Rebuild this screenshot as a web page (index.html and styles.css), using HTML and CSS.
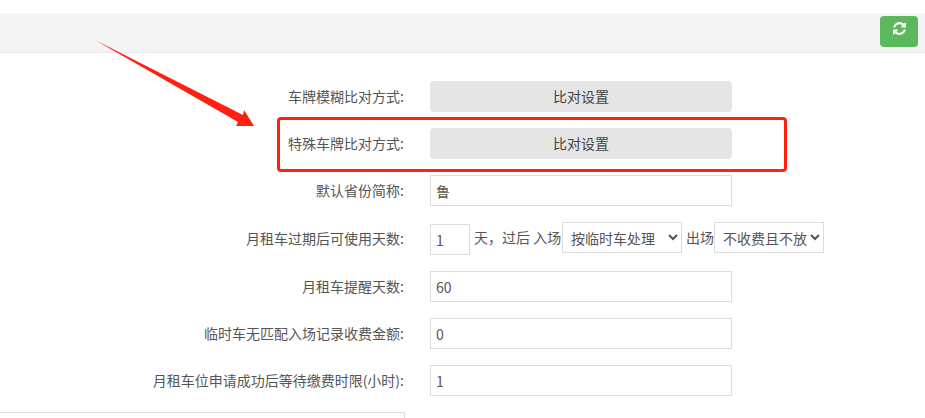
FILE: index.html
```html
<!DOCTYPE html>
<html lang="zh-CN">
<head>
<meta charset="utf-8">
<title>车牌比对设置</title>
<link rel="stylesheet" href="styles.css">
</head>
<body>
<header class="toolbar">
  <button class="refresh" type="button" aria-label="刷新">
    <svg class="refresh-icon" viewBox="128 128 1536 1536" aria-hidden="true"><path d="M1639 1056q0 5-1 7-64 268-268 434.5t-478 166.5q-146 0-282.5-55t-243.5-157l-129 129q-19 19-45 19t-45-19-19-45v-448q0-26 19-45t45-19h448q26 0 45 19t19 45-19 45l-137 137q71 66 161 102t187 36q134 0 250-65t186-179q11-17 53-117 8-23 30-23h192q13 0 22.5 9.5t9.5 22.5zm25-800v448q0 26-19 45t-45 19h-448q-26 0-45-19t-19-45 19-45l138-138q-148-137-349-137-134 0-250 65t-186 179q-11 17-53 117-8 23-30 23h-199q-13 0-22.5-9.5t-9.5-22.5v-7q65-268 270-434.5t480-166.5q146 0 284 55.5t245 156.5l130-129q19-19 45-19t45 19 19 45z"/></svg>
  </button>
</header>
<main class="form">
  <div class="row">
    <label class="label">车牌模糊比对方式:</label>
    <button class="action" type="button">比对设置</button>
  </div>
  <div class="row">
    <label class="label">特殊车牌比对方式:</label>
    <button class="action" type="button">比对设置</button>
  </div>
  <div class="row">
    <label class="label">默认省份简称:</label>
    <input class="field" type="text" value="鲁">
  </div>
  <div class="row row-tall">
    <label class="label">月租车过期后可使用天数:</label>
    <div class="inline">
      <input class="field field-short" type="text" value="1">
      <span class="text text-days">天，过后 入场</span>
      <select class="choice choice-in"><option>按临时车处理</option></select>
      <span class="text text-out">出场</span>
      <select class="choice choice-out"><option>不收费且不放</option></select>
    </div>
  </div>
  <div class="row">
    <label class="label">月租车提醒天数:</label>
    <input class="field" type="text" value="60">
  </div>
  <div class="row">
    <label class="label">临时车无匹配入场记录收费金额:</label>
    <input class="field" type="text" value="0">
  </div>
  <div class="row">
    <label class="label">月租车位申请成功后等待缴费时限(小时):</label>
    <input class="field" type="text" value="1">
  </div>
  <div class="lower-box"></div>
</main>
<svg class="arrow" viewBox="0 0 925 418" aria-hidden="true"><polygon points="95,40 243,115 244,110 254,126 236,126 238,122"/></svg>
<div class="highlight"></div>
</body>
</html>
```
FILE: styles.css
```css
* {
  box-sizing: border-box;
}

html,
body {
  height: 418px;
  margin: 0;
  overflow: hidden;
}

body {
  position: relative;
  background: #fff;
  color: #555;
  font: 14px/20px "Noto Sans CJK SC", "Noto Sans", sans-serif;
}

.toolbar {
  display: flex;
  justify-content: flex-end;
  height: 40px;
  margin-top: 13px;
  padding: 3px 7px 0 0;
  background: #f4f4f4;
  border-bottom: 1px solid #e7e7e7;
}

.refresh {
  display: flex;
  justify-content: center;
  width: 38px;
  height: 31px;
  padding: 6px 0 0;
  background: #5cb85c;
  border: 0;
  border-radius: 4px;
}

.refresh-icon {
  width: 13px;
  height: 13px;
  fill: #fff;
}

.form {
  display: flex;
  flex-direction: column;
  gap: 16px;
  padding-top: 28px;
}

.row {
  display: flex;
  align-items: center;
  gap: 25px;
  min-height: 31px;
}

.row-tall {
  min-height: 33px;
}

.label {
  flex: 0 0 405px;
  padding-right: 1px;
  padding-bottom: 2px;
  color: #555;
  text-align: right;
}

.row-tall .label {
  padding-bottom: 1px;
}

.action {
  width: 302px;
  height: 31px;
  padding: 0 0 2px;
  color: #444;
  background: #e5e5e5;
  border: 0;
  border-radius: 4px;
  font: inherit;
}

.field {
  width: 302px;
  height: 31px;
  padding: 1px 5px 0;
  color: #555;
  background: #fff;
  border: 1px solid #ddd;
  border-radius: 0;
  outline: 0;
  font: inherit;
}

.inline {
  display: flex;
  align-items: flex-start;
  height: 33px;
}

.field-short {
  width: 40px;
  margin-top: 2px;
}

.text {
  line-height: 31px;
  white-space: nowrap;
}

.text-days {
  width: 92px;
  padding-left: 4px;
}

.text-out {
  width: 32px;
  padding-left: 4px;
}

.choice {
  height: 31px;
  padding: 0 0 0 4px;
  color: #555;
  background: #fff;
  border: 1px solid #ddd;
  border-radius: 0;
  outline: 0;
  font: inherit;
}

.choice-in {
  width: 120px;
}

.choice-out {
  width: 110px;
}

.lower-box {
  width: 405px;
  height: 20px;
  border-top: 1px solid #ddd;
  border-right: 1px solid #ddd;
}

.arrow {
  position: absolute;
  top: 0;
  left: 0;
  width: 925px;
  height: 418px;
  fill: #ff2012;
  pointer-events: none;
}

.highlight {
  position: absolute;
  top: 117px;
  left: 277px;
  width: 510px;
  height: 55px;
  border: 3px solid #ff2012;
  border-radius: 4px;
}
```
